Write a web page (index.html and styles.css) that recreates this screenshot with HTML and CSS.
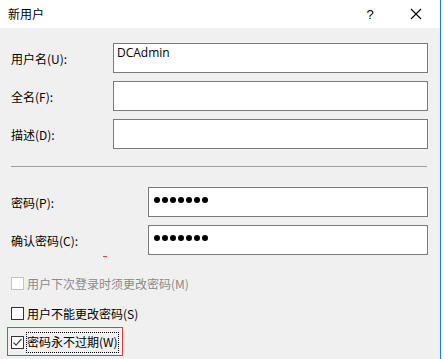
FILE: index.html
```html
<!DOCTYPE html>
<html lang="zh-CN">
<head>
    <meta charset="UTF-8">
    <title>新用户</title>
    <link rel="stylesheet" href="styles.css">
</head>
<body>
    <div class="ventana">
        <div class="barra-titulo">
            <span class="titulo">新用户</span>
            <span class="btn-ayuda">?</span>
            <span class="btn-cerrar">
                <svg width="12" height="12" viewBox="0 0 12 12"><path d="M1 1L11 11M11 1L1 11" stroke="#000" stroke-width="1.1" fill="none"/></svg>
            </span>
        </div>
        <div class="contenido">
            <div class="fila">
                <label class="etiqueta">用户名(U):</label>
                <div class="campo">DCAdmin</div>
            </div>
            <div class="fila">
                <label class="etiqueta">全名(F):</label>
                <div class="campo"></div>
            </div>
            <div class="fila">
                <label class="etiqueta">描述(D):</label>
                <div class="campo"></div>
            </div>

            <div class="separador"></div>

            <div class="fila fila-clave">
                <label class="etiqueta">密码(P):</label>
                <div class="campo puntos">
                    <i></i><i></i><i></i><i></i><i></i><i></i><i></i>
                </div>
            </div>
            <div class="fila fila-clave">
                <label class="etiqueta">确认密码(C):</label>
                <div class="campo puntos">
                    <i></i><i></i><i></i><i></i><i></i><i></i><i></i>
                </div>
                <span class="marca-roja"></span>
            </div>

            <div class="opciones">
                <div class="opcion deshabilitada">
                    <span class="caja"></span>
                    <span>用户下次登录时须更改密码(M)</span>
                </div>
                <div class="opcion">
                    <span class="caja"></span>
                    <span>用户不能更改密码(S)</span>
                </div>
                <div class="opcion marcada">
                    <span class="caja">
                        <svg width="11" height="11" viewBox="0 0 11 11"><path d="M1.5 5.5L4 8.2L9.5 2" stroke="#444" stroke-width="1.2" fill="none"/></svg>
                    </span>
                    <span class="foco">密码永不过期(W)</span>
                </div>
            </div>
        </div>
    </div>
</body>
</html>
```

FILE: styles.css
```css
body {
    margin: 0;
    background: #fff;
    font-family: "Noto Sans CJK SC", "Noto Sans", sans-serif;
    font-size: 12px;
    color: #000;
}

.ventana {
    width: 440px;
    height: 359px;
    border-right: 1px solid #1c7ed6;
    display: flex;
    flex-direction: column;
    overflow: hidden;
}

.barra-titulo {
    height: 28px;
    flex-shrink: 0;
    background: #fff;
    display: flex;
    align-items: center;
    padding-left: 8px;
}

.titulo {
    flex: 1;
    line-height: 1;
}

.btn-ayuda {
    width: 46px;
    text-align: center;
    font-family: "Liberation Sans", sans-serif;
    font-size: 13px;
}

.btn-cerrar {
    width: 46px;
    display: flex;
    justify-content: center;
    margin-right: 1px;
}

.contenido {
    flex: 1;
    background: #f0f0f0;
    padding: 15px 12px 0 11px;
}

.fila {
    position: relative;
    display: flex;
    align-items: center;
    height: 30px;
    margin-bottom: 8px;
}

.etiqueta {
    width: 102px;
    line-height: 1;
    padding-top: 1px;
}

.fila-clave .etiqueta {
    width: 137px;
}

.campo {
    flex: 1;
    height: 30px;
    background: #fff;
    border: 1px solid #7a7a7a;
    font-family: "Open Sans", "Noto Sans", sans-serif;
    font-size: 12px;
    line-height: 16px;
    padding: 1px 0 0 3px;
    box-sizing: border-box;
}

.puntos {
    display: flex;
    gap: 2px;
    padding: 9px 0 0 5px;
}

.puntos i {
    width: 6px;
    height: 6px;
    border-radius: 50%;
    background: #000;
}

.marca-roja {
    position: absolute;
    left: 92px;
    bottom: -2px;
    width: 4px;
    height: 1px;
    background: #f04040;
}

.separador {
    height: 1px;
    background: #a0a0a0;
    margin: 17px 1px 20px 0;
}

.opciones {
    padding-top: 10px;
}

.opcion {
    display: flex;
    align-items: center;
    height: 20px;
    margin-bottom: 10px;
    gap: 3px;
}

.opcion + .opcion {
    margin-bottom: 9px;
}

.opcion .caja {
    width: 11px;
    height: 11px;
    border: 1px solid #333;
    background: #fff;
    display: flex;
    align-items: center;
    justify-content: center;
}

.opcion.deshabilitada {
    color: #8a8a8a;
}

.opcion.deshabilitada .caja {
    border-color: #c4c4c4;
}

.opcion.marcada {
    position: relative;
}

.opcion.marcada::before {
    content: "";
    position: absolute;
    left: -4px;
    top: -5px;
    width: 114px;
    height: 27px;
    border: 1px solid #e8383d;
}

.foco {
    outline: 1px dotted #000;
    padding: 1px 0 2px 0;
    line-height: 16px;
}
```
